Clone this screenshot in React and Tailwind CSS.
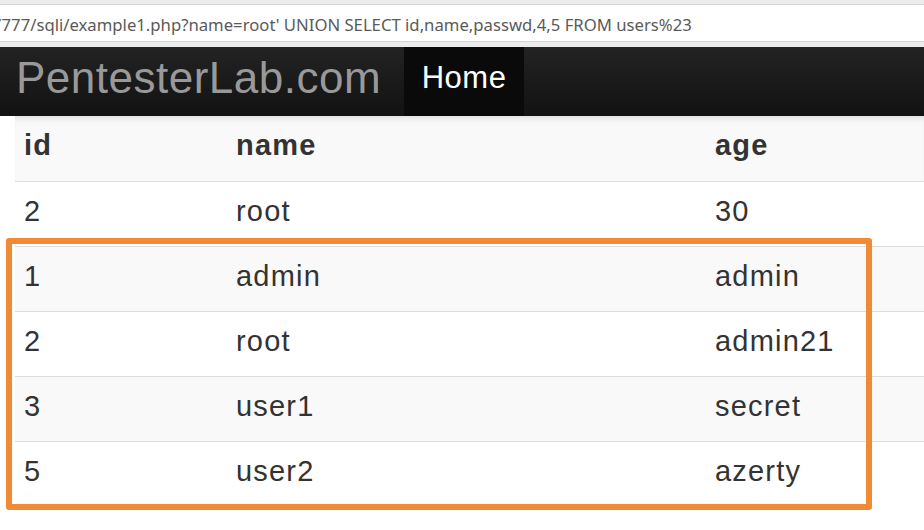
import React from 'react';

const rows = [
  ['2', 'root', '30'],
  ['1', 'admin', 'admin'],
  ['2', 'root', 'admin21'],
  ['3', 'user1', 'secret'],
  ['5', 'user2', 'azerty'],
];

export default function App() {
  return (
    <div className="w-[924px] h-[530px] overflow-hidden bg-white relative" style={{ fontFamily: '"Liberation Sans", Arial, sans-serif' }}>
      {/* address bar */}
      <div className="h-[47px] bg-[#ececec] pt-[4px]">
        <div className="h-[38px] bg-white border-y border-[#d4d4d4] flex items-center overflow-hidden whitespace-nowrap">
          <span className="-ml-[8px] mt-[4px] text-[16.7px] text-[#5a5a5a]" style={{ fontFamily: '"Noto Sans", "Open Sans", sans-serif' }}>
            7777/sqli/example1.php?name=root' UNION SELECT id,name,passwd,4,5 FROM users%23
          </span>
        </div>
      </div>

      {/* navbar */}
      <div className="h-[69px] flex bg-gradient-to-b from-[#232323] to-[#121212]">
        <div className="pl-[16px] pr-[23px] pb-[7px] flex items-center text-[44px] text-[#999] tracking-[0.5px]">
          PentesterLab.com
        </div>
        <div className="w-[120px] pb-[7px] bg-[#0a0a0a] flex items-center justify-center text-[31px] text-white tracking-[0.5px]">
          Home
        </div>
      </div>

      {/* table */}
      <div className="ml-[15px] text-[29px] leading-[40px] tracking-[1.2px] text-[#333]">
        <div className="grid grid-cols-[211px_479px_1fr] h-[65px] bg-[#f9f9f9] font-bold shadow-[inset_0_6px_6px_-4px_rgba(0,0,0,0.12)]">
          <div className="pl-[9px] pt-[9px]">id</div>
          <div className="pl-[10px] pt-[9px]">name</div>
          <div className="pl-[10px] pt-[9px]">age</div>
        </div>
        {rows.map((r, i) => (
          <div
            key={i}
            className={`grid grid-cols-[211px_479px_1fr] h-[65px] border-t border-[#dddddd] ${i % 2 === 1 ? 'bg-[#f9f9f9]' : 'bg-white'}`}
          >
            <div className="pl-[9px] pt-[9px]">{r[0]}</div>
            <div className="pl-[10px] pt-[9px]">{r[1]}</div>
            <div className="pl-[10px] pt-[9px]">{r[2]}</div>
          </div>
        ))}
      </div>

      {/* highlight box */}
      <div className="absolute left-[6px] top-[238px] w-[866px] h-[272px] border-[6px] border-[#f08a35] rounded-[3px]" />
    </div>
  );
}
